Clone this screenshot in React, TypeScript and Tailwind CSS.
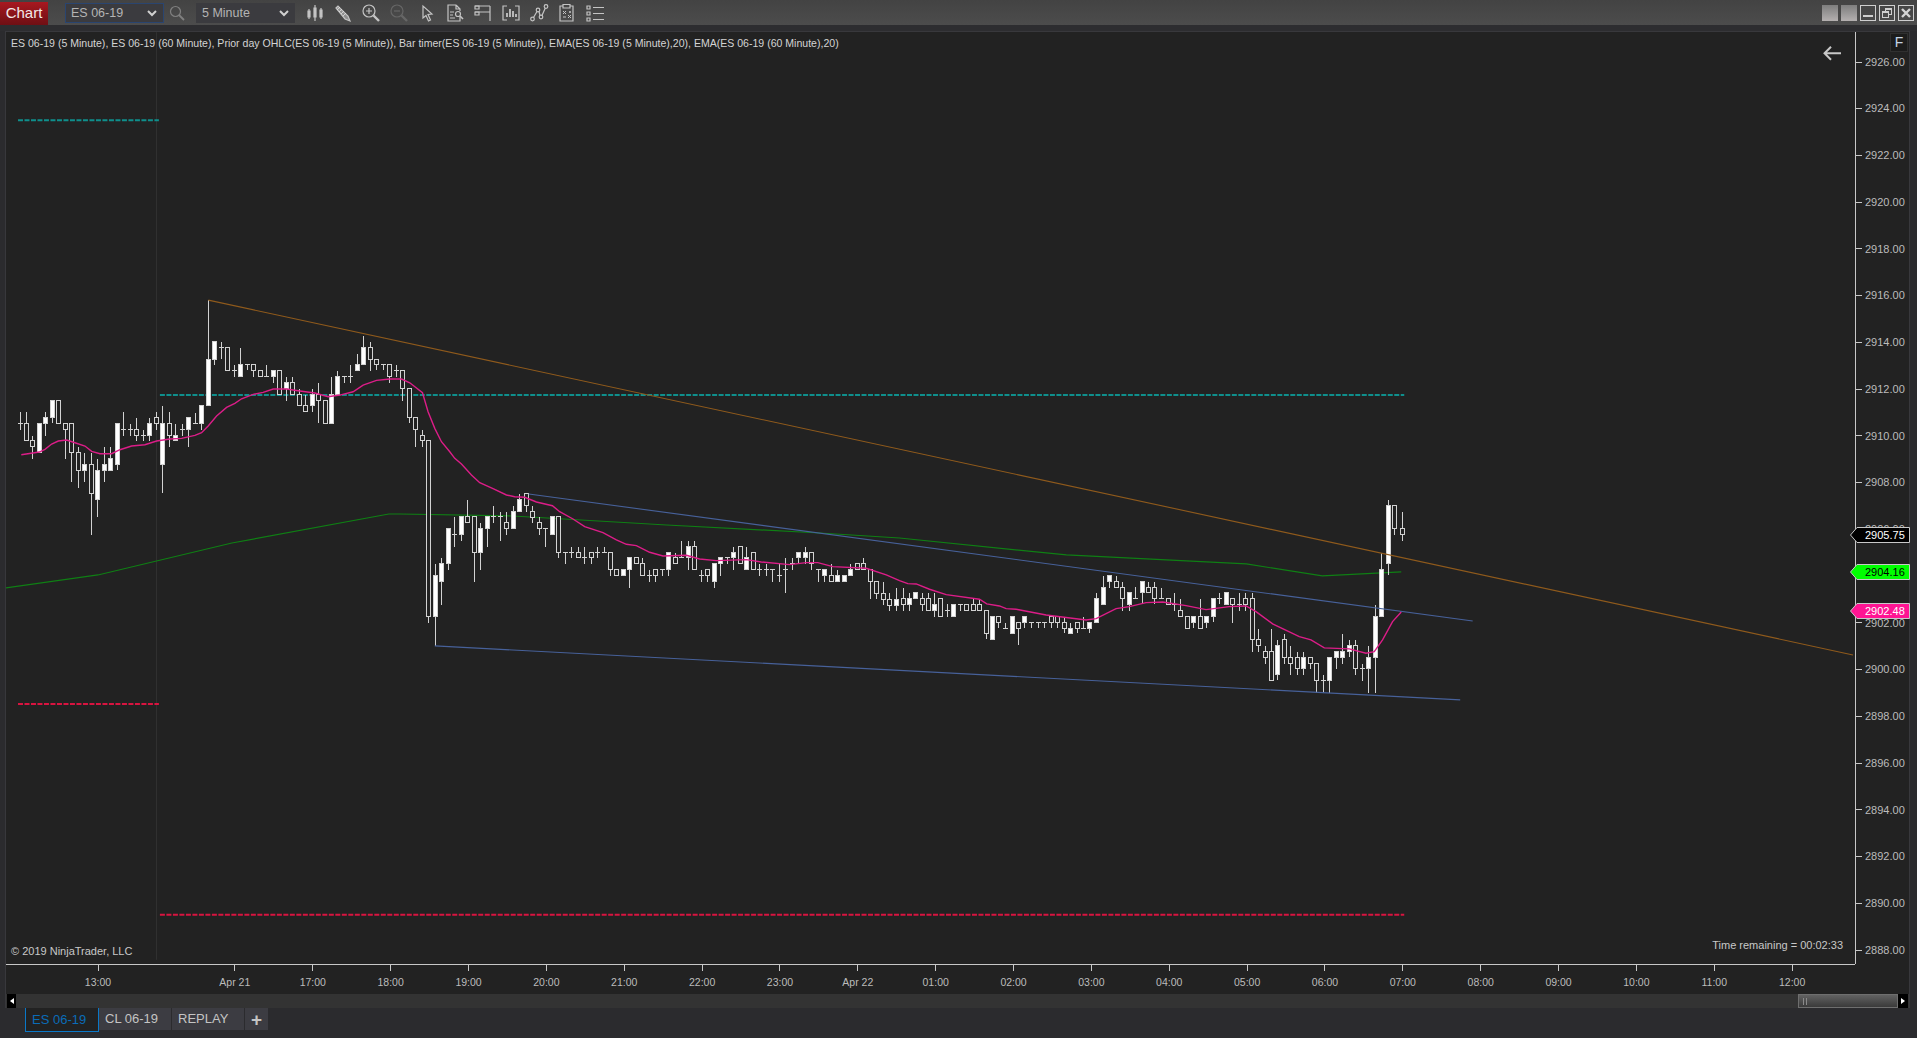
import { ReactNode } from "react";

// [u, high, top, bottom, low, filled] in 3x crop units, converted by seg()
type Row = [number, number, number, number, number, number];
type Candle = { x: number; h: number; t: number; b: number; l: number; f: number };

const seg = (x0: number, y0: number, rows: Row[]): Candle[] =>
  rows.map(([u, h, t, b, l, f]) => ({
    x: Math.round(x0 + u / 3),
    h: Math.round(y0 + h / 3),
    t: Math.round(y0 + t / 3),
    b: Math.round(y0 + b / 3),
    l: Math.round(y0 + l / 3),
    f,
  }));

const candles: Candle[] = [
  ...seg(0, 290, [
    [59, 366, 400, 400, 420, 0], [79, 366, 400, 451, 451, 0], [97, 438, 451, 469, 506, 0], [118, 400, 400, 487, 487, 1],
    [136, 366, 382, 400, 438, 1], [157, 331, 331, 382, 400, 1], [175, 331, 331, 400, 400, 0], [196, 400, 400, 418, 506, 0],
    [214, 400, 400, 487, 575, 0], [235, 470, 487, 541, 593, 0], [253, 488, 523, 541, 575, 1], [274, 488, 523, 610, 735, 0],
    [292, 506, 541, 628, 680, 1], [313, 470, 523, 541, 575, 1], [331, 470, 505, 541, 541, 1], [352, 400, 400, 523, 541, 1],
    [370, 366, 418, 418, 438, 0], [391, 403, 418, 418, 438, 0], [409, 384, 418, 436, 452, 0], [430, 420, 436, 436, 452, 0],
    [448, 384, 400, 436, 452, 1], [469, 366, 382, 400, 420, 0], [487, 348, 400, 523, 610, 1], [508, 366, 400, 436, 470, 0],
    [526, 402, 436, 451, 451, 1], [547, 402, 418, 418, 438, 0], [565, 382, 382, 418, 470, 1], [586, 370, 400, 400, 400, 0],
    [604, 346, 346, 400, 420, 1], [625, 30, 208, 346, 346, 1], [643, 154, 154, 208, 224, 1], [664, 156, 172, 172, 208, 0],
    [682, 172, 172, 241, 241, 0], [703, 226, 241, 241, 260, 0], [721, 175, 223, 259, 259, 1], [742, 223, 223, 223, 241, 0],
    [760, 223, 223, 241, 260, 0], [781, 241, 241, 259, 259, 0], [799, 226, 259, 259, 259, 0], [820, 241, 241, 259, 278, 1],
    [838, 241, 241, 313, 313, 0], [859, 262, 277, 295, 333, 1], [877, 262, 277, 313, 313, 0], [898, 297, 313, 346, 346, 0],
    [916, 315, 346, 364, 364, 0], [937, 297, 313, 346, 365, 1], [955, 280, 313, 331, 400, 0], [976, 331, 331, 400, 400, 0],
    [994, 262, 313, 400, 400, 1], [1012, 243, 259, 313, 313, 1], [1033, 259, 259, 259, 278, 0], [1051, 225, 259, 259, 278, 0],
    [1072, 192, 223, 241, 241, 1], [1090, 138, 172, 223, 223, 1], [1111, 156, 172, 208, 243, 0], [1129, 208, 208, 223, 241, 0],
    [1150, 223, 223, 223, 241, 0], [1168, 223, 223, 259, 278, 0], [1189, 225, 241, 241, 260, 0], [1207, 241, 241, 295, 333, 0],
    [1228, 295, 295, 382, 400, 0], [1246, 382, 382, 418, 470, 0], [1267, 420, 436, 451, 470, 0],
  ]),
  ...seg(400, 440, [
    [85, 0, 0, 529, 548, 0], [106, 372, 405, 529, 618, 1], [124, 354, 370, 424, 495, 1], [145, 265, 265, 370, 390, 1],
    [163, 231, 283, 283, 320, 0], [184, 229, 229, 283, 302, 1], [202, 180, 229, 247, 247, 0], [223, 229, 229, 337, 425, 0],
    [241, 249, 265, 337, 390, 1], [262, 229, 229, 265, 320, 1], [280, 198, 229, 229, 249, 0], [301, 216, 229, 229, 303, 0],
    [319, 216, 247, 265, 285, 0], [340, 198, 214, 265, 265, 1], [358, 162, 178, 214, 214, 1], [379, 160, 160, 196, 216, 0],
    [397, 198, 214, 230, 249, 0], [418, 230, 247, 265, 285, 0], [436, 265, 265, 265, 320, 0], [457, 229, 229, 283, 283, 1],
    [475, 229, 229, 337, 354, 0], [496, 337, 337, 337, 372, 0], [514, 322, 337, 337, 354, 0], [535, 322, 337, 352, 352, 0],
    [553, 322, 352, 352, 372, 0], [574, 337, 337, 352, 372, 0], [592, 322, 337, 337, 354, 0], [613, 322, 337, 337, 337, 0],
    [631, 337, 337, 388, 407, 0], [649, 388, 388, 406, 406, 0], [670, 388, 388, 406, 406, 1], [688, 352, 352, 388, 443, 1],
    [709, 352, 352, 370, 370, 0], [727, 354, 370, 406, 406, 0], [748, 391, 406, 406, 425, 0], [766, 388, 388, 406, 425, 0],
    [787, 388, 388, 388, 407, 0], [805, 337, 337, 388, 407, 1], [826, 340, 352, 370, 370, 0], [844, 303, 352, 352, 352, 0],
    [865, 303, 319, 352, 390, 1], [883, 303, 319, 388, 388, 0], [904, 390, 406, 406, 425, 0], [922, 388, 388, 406, 425, 0],
    [943, 370, 370, 424, 443, 1], [961, 352, 352, 370, 407, 1], [982, 352, 352, 352, 372, 0], [1000, 322, 337, 352, 390, 1],
    [1021, 319, 319, 370, 370, 0], [1039, 322, 352, 388, 388, 1], [1060, 337, 337, 388, 388, 0], [1078, 372, 388, 388, 407, 0],
    [1099, 372, 388, 388, 407, 0], [1117, 388, 388, 388, 425, 0], [1138, 372, 406, 406, 425, 0], [1156, 354, 388, 388, 458, 0],
    [1177, 354, 370, 370, 390, 0], [1195, 337, 337, 352, 372, 1], [1216, 322, 337, 352, 372, 1], [1234, 337, 337, 370, 390, 0],
    [1255, 388, 388, 388, 425, 0], [1273, 388, 388, 406, 425, 1], [1294, 372, 406, 424, 424, 0], [1312, 390, 406, 424, 424, 1],
    [1333, 406, 406, 424, 424, 1], [1351, 372, 388, 406, 406, 1], [1372, 370, 370, 388, 388, 0], [1390, 354, 370, 388, 388, 0],
    [1411, 388, 388, 424, 476, 0], [1429, 424, 424, 458, 476, 0], [1450, 425, 458, 476, 495, 0], [1468, 458, 476, 494, 513, 0],
    [1489, 445, 476, 494, 513, 1],
  ]),
  ...seg(900, 520, [
    [8, 203, 235, 253, 272, 0], [26, 220, 235, 253, 272, 1], [46, 217, 217, 235, 235, 1], [65, 220, 235, 253, 272, 0],
    [85, 220, 235, 271, 271, 0], [104, 220, 253, 271, 290, 1], [124, 235, 235, 289, 289, 0], [143, 253, 271, 271, 290, 0],
    [163, 253, 253, 289, 289, 1], [182, 253, 253, 253, 272, 0], [202, 253, 253, 271, 271, 0], [221, 238, 253, 271, 271, 0],
    [241, 238, 253, 271, 271, 0], [260, 271, 271, 340, 358, 0], [280, 289, 289, 358, 358, 1], [298, 289, 289, 307, 325, 0],
    [319, 308, 325, 325, 325, 0], [338, 289, 289, 340, 340, 1], [358, 307, 307, 325, 376, 0], [376, 289, 289, 307, 325, 1],
    [397, 307, 307, 307, 325, 0], [416, 307, 307, 307, 325, 0], [436, 307, 307, 307, 325, 0], [455, 289, 289, 307, 325, 0],
    [475, 289, 289, 307, 325, 0], [494, 290, 307, 325, 340, 0], [514, 308, 325, 340, 340, 1], [533, 307, 307, 325, 340, 0],
    [553, 292, 325, 325, 325, 0], [571, 307, 307, 325, 340, 1], [592, 220, 235, 307, 307, 1], [611, 168, 202, 253, 253, 1],
    [631, 166, 166, 184, 203, 1], [650, 168, 184, 202, 202, 0], [670, 186, 202, 235, 272, 0], [689, 217, 217, 253, 272, 1],
    [709, 202, 235, 235, 235, 0], [728, 184, 184, 217, 253, 1], [748, 186, 202, 217, 217, 0], [766, 186, 202, 235, 253, 0],
    [787, 204, 235, 235, 235, 0], [806, 235, 235, 253, 253, 0], [826, 220, 253, 253, 272, 0], [844, 238, 271, 289, 289, 0],
    [865, 289, 289, 325, 325, 0], [883, 289, 289, 307, 325, 1], [904, 238, 289, 325, 325, 0], [922, 289, 289, 307, 325, 1],
    [941, 235, 235, 289, 307, 1], [961, 220, 235, 235, 253, 0], [980, 217, 217, 253, 253, 1], [1000, 235, 235, 253, 308, 0],
    [1019, 220, 253, 253, 272, 0], [1039, 220, 235, 253, 272, 0], [1058, 220, 235, 358, 395, 0], [1078, 327, 358, 376, 395, 0],
    [1097, 378, 394, 412, 432, 0], [1117, 327, 394, 481, 481, 0], [1135, 360, 376, 463, 481, 1], [1156, 342, 358, 412, 432, 0],
    [1174, 378, 412, 430, 465, 0], [1195, 396, 412, 445, 465, 0], [1213, 396, 412, 445, 465, 1], [1234, 412, 412, 430, 447, 0],
    [1252, 430, 430, 481, 518, 0], [1273, 465, 481, 481, 518, 0], [1291, 412, 412, 481, 518, 1], [1312, 394, 394, 412, 447, 1],
    [1330, 342, 394, 412, 432, 1], [1351, 360, 376, 394, 412, 1], [1369, 360, 376, 445, 465, 0], [1390, 432, 445, 445, 483, 0],
    [1408, 378, 412, 445, 518, 1], [1429, 255, 289, 412, 518, 1], [1447, 100, 148, 289, 289, 1], [1468, -60, -45, 130, 166, 1],
    [1486, -45, -45, 24, 45, 0], [1508, -24, 24, 42, 62, 0],
  ]),
];

const p = (x0: number, y0: number, pts: number[][]) => pts.map(([u, v]) => `${(x0 + u / 3).toFixed(1)},${(y0 + v / 3).toFixed(1)}`);

const emaFast = [
  ...p(0, 290, [[64, 494], [118, 486], [135, 478], [155, 462], [175, 453], [200, 450], [225, 458], [255, 468], [275, 484], [300, 491], [335, 491], [360, 479], [395, 468], [435, 464], [470, 453], [510, 447], [545, 445], [585, 436], [605, 428], [625, 408], [650, 378], [680, 352], [705, 340], [725, 326], [760, 313], [790, 307], [820, 297], [860, 297], [900, 303], [945, 309], [985, 320], [1020, 315], [1060, 305], [1090, 285], [1130, 271], [1170, 267], [1205, 267], [1230, 278], [1268, 308], [1285, 365], [1305, 415], [1325, 455]]),
  ...p(400, 440, [[150, 35], [165, 55], [185, 72], [215, 105], [240, 128], [280, 146], [320, 165], [345, 170], [375, 172], [410, 186], [458, 197], [480, 215], [520, 237], [555, 260], [610, 278], [650, 300], [680, 313], [710, 317], [750, 337], [790, 348], [860, 346], [900, 357], [950, 362], [1040, 359], [1085, 366], [1170, 374], [1220, 368], [1255, 368], [1300, 380], [1400, 385], [1460, 405]]),
  ...p(900, 520, [[0, 182], [25, 191], [50, 192], [90, 208], [140, 224], [240, 238], [262, 252], [300, 258], [320, 266], [350, 268], [440, 285], [560, 300], [590, 296], [650, 266], [690, 260], [740, 248], [790, 246], [860, 257], [920, 269], [990, 260], [1040, 258], [1070, 275], [1120, 312], [1200, 350], [1235, 360], [1275, 384], [1350, 387], [1400, 400], [1425, 395], [1450, 360], [1480, 305], [1506, 276]]),
].join(" ");

const emaSlow = "6,588 98,575 232,543 389,514 400,514 513,516 667,525 820,533 900,538 1067,555 1247,564 1323,576 1402,572";

const prices = Array.from({ length: 20 }, (_, i) => ({ label: (2926 - i * 2).toFixed(2), y: 62 + i * 46.74 - 32 }));

const times = [
  { label: "13:00", x: 97.5 },
  { label: "Apr 21", x: 234.3 },
  ...["17:00", "18:00", "19:00", "20:00", "21:00", "22:00", "23:00", "Apr 22", "01:00", "02:00", "03:00", "04:00", "05:00", "06:00", "07:00", "08:00", "09:00", "10:00", "11:00", "12:00"].map((label, i) => ({
    label,
    x: 312.3 + i * 77.86,
  })),
];

function ChartPlot() {
  return (
    <svg className="absolute inset-0 h-full w-full" viewBox="6 32 1850 932">
      <line x1="156.5" y1="32" x2="156.5" y2="960" stroke="#323232" />
      <line x1="18" y1="120" x2="159" y2="120" stroke="#0f8f8c" strokeWidth="2" strokeDasharray="5 1.5" />
      <line x1="18" y1="704" x2="159" y2="704" stroke="#d81440" strokeWidth="2" strokeDasharray="5 1.5" />
      <line x1="160" y1="395" x2="1405" y2="395" stroke="#0f8f8c" strokeWidth="2" strokeDasharray="5 1.5" />
      <line x1="160" y1="915" x2="1405" y2="915" stroke="#d81440" strokeWidth="2" strokeDasharray="5 1.5" />
      <polyline points={emaSlow} fill="none" stroke="#0f7f14" strokeWidth="1.2" />
      <g shapeRendering="crispEdges">
        {candles.map((c, i) => (
          <g key={i} stroke="#d2d2d2">
            <line x1={c.x + 0.5} y1={c.h} x2={c.x + 0.5} y2={c.t} />
            <line x1={c.x + 0.5} y1={c.b} x2={c.x + 0.5} y2={c.l} />
            {c.t === c.b ? (
              <line x1={c.x - 2} y1={c.t + 0.5} x2={c.x + 3} y2={c.t + 0.5} />
            ) : (
              <rect x={c.x - 1.5} y={c.t + 0.5} width="4" height={c.b - c.t} fill={c.f ? "#ffffff" : "#222222"} />
            )}
          </g>
        ))}
      </g>
      <line x1="208.5" y1="300" x2="1854" y2="655" stroke="#8f5a1c" strokeWidth="1.1" />
      <line x1="529" y1="494" x2="1473.5" y2="621" stroke="#47619a" strokeWidth="1.1" />
      <line x1="435" y1="646" x2="1461" y2="700" stroke="#47619a" strokeWidth="1.1" />
      <polyline points={emaFast} fill="none" stroke="#dc1d88" strokeWidth="1.4" />
      <path d="M1825 53H1842M1832 46.5L1825.5 53L1832 59.5" fill="none" stroke="#c8c8c8" strokeWidth="2" />
    </svg>
  );
}

function Tag({ y, bg, color, label }: { y: number; bg: string; color: string; label: string }) {
  return (
    <div className="absolute left-[-6px] h-[16px] w-[60px]" style={{ top: y }}>
      <svg className="absolute inset-0" width="60" height="16">
        <path d="M0.5 8L7 0.5H59.5V15.5H7Z" fill={bg} stroke="#c8c8c8" />
      </svg>
      <span className="absolute left-[15px] top-0 text-[11px] leading-[16px]" style={{ color }}>
        {label}
      </span>
    </div>
  );
}

function PriceAxis() {
  return (
    <div className="relative w-[54px] border-l border-[#c8c8c8]">
      {prices.map((t) => (
        <div key={t.label} className="absolute left-0 flex h-[14px] items-center" style={{ top: t.y - 7 }}>
          <div className="h-px w-[6px] bg-[#c8c8c8]" />
          <span className="ml-[3px] text-[11px] text-[#bcbcbc]">{t.label}</span>
        </div>
      ))}
      <div className="absolute left-[34px] top-px flex h-[19px] w-[18px] items-center justify-center border border-[#303030] bg-[#1c1c1c] text-[14px] text-[#c4d4e4]">
        F
      </div>
      <Tag y={495} bg="#000000" color="#ffffff" label="2905.75" />
      <Tag y={532} bg="#00ff00" color="#000000" label="2904.16" />
      <Tag y={571} bg="#ff1493" color="#ffffff" label="2902.48" />
    </div>
  );
}

function TimeAxis() {
  return (
    <div className="relative mr-[54px] h-[30px] shrink-0 border-t border-[#c8c8c8]">
      {times.map((t) => (
        <div key={t.label} className="absolute top-0 flex w-[50px] flex-col items-center" style={{ left: t.x - 6 - 24.5 }}>
          <div className="h-[6px] w-px bg-[#c8c8c8]" />
          <span className="mt-[4px] text-[10.5px] leading-[14px] text-[#bcbcbc]">{t.label}</span>
        </div>
      ))}
    </div>
  );
}

function Ico({ children, dim }: { children: ReactNode; dim?: boolean }) {
  return (
    <div className="flex w-[28px] justify-center">
      <svg width="20" height="20" viewBox="0 0 20 20" fill="none" stroke={dim ? "#666666" : "#c4c4c4"} strokeWidth="1.2">
        {children}
      </svg>
    </div>
  );
}

function Caret() {
  return (
    <svg width="10" height="7" viewBox="0 0 10 7" fill="none" stroke="#d0d0d0" strokeWidth="2">
      <path d="M1 1L5 5L9 1" />
    </svg>
  );
}

function Toolbar() {
  return (
    <div className="flex h-[31px] shrink-0 flex-col bg-[#2d2d30]">
      <div className="flex h-[25px] items-center bg-gradient-to-b from-[#434343] to-[#4c4c4c] pt-px">
        <div className="flex h-[23px] w-[48px] items-center justify-center bg-gradient-to-b from-[#a81820] to-[#6f0f14] text-[15px] text-[#f2e8e8]">
          Chart
        </div>
        <div className="ml-[17px] flex h-[20px] w-[99px] items-center justify-between border border-[#2a4570] bg-[#3b3b3f] pl-[5px] pr-[6px] text-[12.5px] text-[#b4b4b4]">
          <span>ES 06-19</span>
          <Caret />
        </div>
        <div className="flex w-[32px] justify-center pr-[6px]">
          <svg width="18" height="18" viewBox="0 0 18 18" fill="none" stroke="#808080" strokeWidth="1.2">
            <circle cx="7.5" cy="7.5" r="5" />
            <path d="M11 11L16 16" strokeWidth="1.8" />
          </svg>
        </div>
        <div className="flex h-[20px] w-[99px] items-center justify-between bg-[#3b3b3f] pl-[6px] pr-[6px] text-[12.5px] text-[#b4b4b4]">
          <span>5 Minute</span>
          <Caret />
        </div>
        <div className="ml-[6px] flex items-center">
          <Ico>
            <path d="M4 6V16M10 2V18M16 5V16" />
            <path d="M3 8h2v6h-2zM9 5h2v9h-2zM15 7h2v7h-2z" fill="#c4c4c4" />
          </Ico>
          <Ico>
            <path d="M3 5L5 3L15 13L17 18L12 16Z" fill="#8f8f8f" />
            <path d="M4 7L7 4M6 9L9 6M8 11L11 8M10 13L13 10" stroke="#e0e0e0" strokeWidth="0.8" />
          </Ico>
          <Ico>
            <circle cx="8" cy="8" r="6" />
            <path d="M5 8H11M8 5V11" />
            <path d="M12.5 12.5L18 18" strokeWidth="2.4" />
          </Ico>
          <Ico dim>
            <circle cx="8" cy="8" r="6" />
            <path d="M5 8H11" />
            <path d="M12.5 12.5L18 18" strokeWidth="2.4" />
          </Ico>
          <Ico>
            <path d="M6 3V15L9 12.5L11.5 18L13.5 17L11 11.5L15 11Z" />
          </Ico>
          <Ico>
            <path d="M11 2H3V18H15V14M11 2L15 6V8M11 2V6H15" />
            <path d="M5 9H9M5 12H8M5 15H10" />
            <circle cx="13" cy="11" r="2.5" />
            <path d="M15 13L18 16" strokeWidth="1.6" />
          </Ico>
          <Ico>
            <path d="M2 3H17M2 9H17M17 3V18" />
            <path d="M2 3H6V6H2ZM2 9H6V12H2Z" />
          </Ico>
          <Ico>
            <path d="M6 3H2V17H6M14 3H18V17H14" />
            <path d="M6 14V10M9 14V6M12 14V8M15 14V11" strokeWidth="1.8" />
          </Ico>
          <Ico>
            <circle cx="3.5" cy="16" r="1.8" />
            <circle cx="9" cy="7" r="1.8" />
            <circle cx="12" cy="14" r="1.8" />
            <circle cx="17" cy="3.5" r="1.8" />
            <path d="M4.5 14.5L8 8.5M10 8.5L11 12.5M13 12.5L16.3 5" />
          </Ico>
          <Ico>
            <path d="M6 3H3V18H16V3H13M6 1.5H13V5H6Z" />
            <path d="M6 8L9 11M9 8L6 11M11 12L14 15M14 12L11 15M13 8V10M12 9H14M6 14H9" strokeWidth="1" />
          </Ico>
          <Ico>
            <path d="M2 3H5V6H2ZM2 9H5V12H2ZM2 15H5V18H2Z" />
            <path d="M8 4.5H19M8 10.5H19M8 16.5H19" />
          </Ico>
        </div>
        <div className="ml-auto mr-[3px] flex gap-[3px]">
          <div className="size-[16px] bg-gradient-to-b from-[#7e7e7e] to-[#b4b0b0]" />
          <div className="size-[16px] bg-gradient-to-b from-[#7e7e7e] to-[#b4b0b0]" />
          <div className="flex size-[16px] items-end justify-center border border-[#cfcfcf] pb-[3px]">
            <div className="h-[2px] w-[10px] bg-[#cfcfcf]" />
          </div>
          <div className="relative size-[16px] border border-[#cfcfcf]">
            <div className="absolute left-[5px] top-[2px] size-[7px] border border-t-2 border-[#cfcfcf]" />
            <div className="absolute left-[2px] top-[5px] size-[7px] border border-t-2 border-[#cfcfcf] bg-[#4a4a4a]" />
          </div>
          <div className="flex size-[16px] items-center justify-center border border-[#cfcfcf]">
            <svg width="10" height="10" viewBox="0 0 10 10" stroke="#d4d4d4" strokeWidth="2.4">
              <path d="M1 1L9 9M9 1L1 9" />
            </svg>
          </div>
        </div>
      </div>
    </div>
  );
}

function ScrollBar() {
  return (
    <div className="flex h-[14px] shrink-0 items-stretch justify-between bg-[#333333] pl-px pr-px">
      <div className="flex w-[9px] items-center justify-center bg-black">
        <div className="h-0 w-0 border-y-[3px] border-r-[4px] border-y-transparent border-r-white" />
      </div>
      <div className="flex">
        <div className="flex w-[100px] items-center border border-[#6e6e6e] bg-gradient-to-b from-[#626262] to-[#3a3a3a] pl-[4px]">
          <div className="h-[7px] w-[4px] border-x border-[#8a8a8a]" />
        </div>
        <div className="flex w-[10px] items-center justify-center bg-black">
          <div className="h-0 w-0 border-y-[3px] border-l-[4px] border-y-transparent border-l-white" />
        </div>
      </div>
    </div>
  );
}

function Tabs() {
  return (
    <div className="flex h-[30px] pl-[25px] text-[13px] text-[#c4c4c4]">
      <div className="flex h-[24px] w-[74px] items-center border-x border-b border-[#0a78c8] bg-[#222222] pl-[6px] text-[#0a6cb8]">ES 06-19</div>
      <div className="flex h-[22px] w-[72px] items-center bg-[#3c3c42] pl-[6px]">CL 06-19</div>
      <div className="ml-px flex h-[22px] w-[72px] items-center bg-[#3c3c42] pl-[6px]">REPLAY</div>
      <div className="ml-px flex h-[22px] w-[23px] items-center justify-center bg-[#3c3c42] text-[19px] font-bold leading-none">+</div>
    </div>
  );
}

export default function App() {
  return (
    <div className="flex h-[1038px] w-[1917px] flex-col overflow-hidden bg-[#2b2b2e] font-['Liberation_Sans',Arial,sans-serif]">
      <Toolbar />
      <div className="ml-[5px] mr-[7px] flex h-[977px] flex-col border border-[#38383c] bg-[#222222]">
        <div className="flex h-[932px] shrink-0">
          <div className="relative flex-1">
            <ChartPlot />
            <p className="absolute left-[5px] top-[4px] text-[10.56px] leading-[14px] text-[#d4d4d4]">
              ES 06-19 (5 Minute), ES 06-19 (60 Minute), Prior day OHLC(ES 06-19 (5 Minute)), Bar timer(ES 06-19 (5 Minute)), EMA(ES 06-19 (5 Minute),20), EMA(ES 06-19 (60 Minute),20)
            </p>
            <p className="absolute bottom-[6px] left-[5px] text-[11px] leading-[14px] text-[#c8c8c8]">© 2019 NinjaTrader, LLC</p>
            <p className="absolute bottom-[12px] right-[12px] text-[11px] leading-[14px] text-[#c8c8c8]">Time remaining = 00:02:33</p>
          </div>
          <PriceAxis />
        </div>
        <TimeAxis />
        <ScrollBar />
      </div>
      <Tabs />
    </div>
  );
}
